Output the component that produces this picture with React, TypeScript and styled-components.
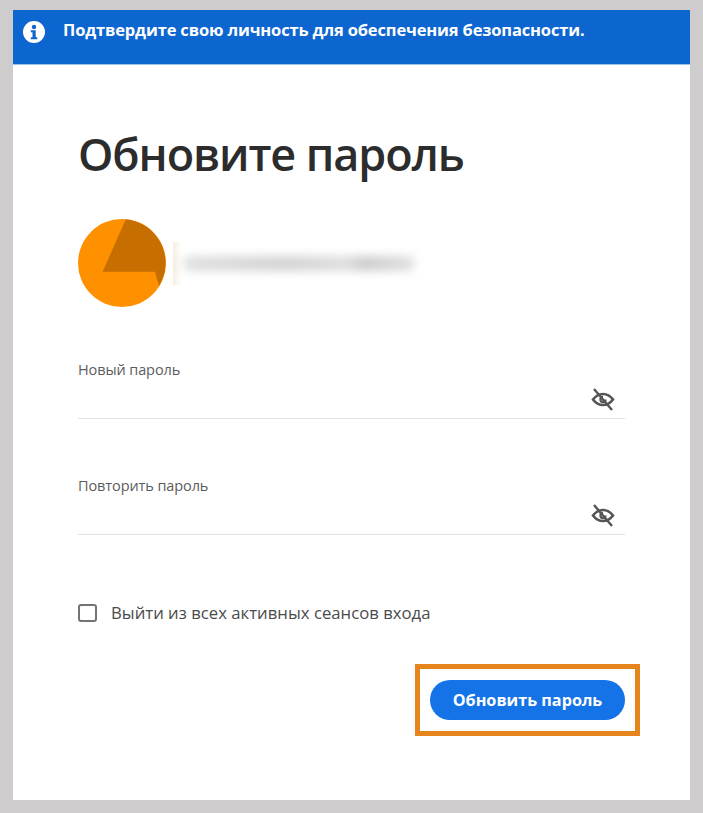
import { ReactElement } from 'react';
import styled, { createGlobalStyle } from 'styled-components';

const GlobalStyle = createGlobalStyle`
  html, body {
    margin: 0;
    padding: 0;
    background: #cecccc;
  }
`;

const Page = styled.div`
  box-sizing: border-box;
  width: 703px;
  height: 813px;
  padding: 10px 13px 13px;
  background: #cecccc;
  font-family: 'Open Sans', 'Noto Sans', sans-serif;
`;

const Card = styled.main`
  height: 790px;
  background: #ffffff;
  display: flex;
  flex-direction: column;
`;

const Banner = styled.div`
  box-sizing: border-box;
  height: 55px;
  padding: 10px 0 0 10px;
  background: #0d66d0;
  border-bottom: 1px solid #9cc3ee;
  display: flex;
  align-items: flex-start;
  gap: 18px;
  color: #ffffff;
`;

const BannerIcon = styled.span`
  display: flex;
  margin-top: 1px;
`;

const BannerText = styled.span`
  font-size: 16.5px;
  font-weight: 700;
  line-height: 20px;
  letter-spacing: -0.15px;
`;

const Content = styled.div`
  flex: 1;
  padding: 0 65px;
  display: flex;
  flex-direction: column;
`;

const Heading = styled.h1`
  margin: 57px 0 0;
  font-size: 45px;
  font-weight: 560;
  line-height: 64px;
  color: #2c2c2c;
  letter-spacing: -1.1px;
`;

const Account = styled.div`
  margin-top: 33px;
  display: flex;
  align-items: center;
  gap: 7px;
`;

const BlurFrame = styled.div`
  box-sizing: border-box;
  width: 250px;
  height: 43px;
  padding-left: 10px;
  overflow: hidden;
  background: linear-gradient(90deg, #f7ede2 0, #ffffff 9px);
  display: flex;
  align-items: center;
`;

const BlurredEmail = styled.div`
  width: 232px;
  height: 15px;
  border-radius: 7px;
  background: linear-gradient(90deg, #e0e0e0, #d2d2d2 45%, #dedede 70%, #cccccc 78%, #e0e0e0);
  filter: blur(5px);
`;

const Field = styled.div<{ $top: number }>`
  margin-top: ${(props) => props.$top}px;
  height: 59px;
  box-sizing: border-box;
  border-bottom: 1px solid #e3e3e3;
  display: flex;
  justify-content: space-between;
`;

const FieldLabel = styled.label`
  margin-top: 1px;
  font-size: 14.5px;
  line-height: 18px;
  color: #5c5c5c;
  letter-spacing: -0.1px;
`;

const FieldIcon = styled.div`
  align-self: flex-end;
  height: 24px;
  margin: 0 10px 7px 0;
`;

const CheckRow = styled.div`
  margin-top: 67px;
  display: flex;
  align-items: center;
  gap: 14px;
`;

const CheckBox = styled.span`
  box-sizing: border-box;
  width: 19px;
  height: 18px;
  border: 2px solid #737373;
  border-radius: 3px;
`;

const CheckLabel = styled.span`
  font-size: 16.7px;
  line-height: 22px;
  color: #4b4b4b;
  letter-spacing: 0.02px;
`;

const Actions = styled.div`
  margin-top: 40px;
  margin-right: -15px;
  display: flex;
  justify-content: flex-end;
`;

const Highlight = styled.div`
  box-sizing: border-box;
  width: 225px;
  height: 72px;
  padding: 11px 10px 0;
  border: 5px solid #e5851b;
`;

const PrimaryButton = styled.button`
  width: 100%;
  height: 40px;
  border: none;
  border-radius: 20px;
  background: #1473e6;
  color: #ffffff;
  font-family: inherit;
  font-size: 16.2px;
  font-weight: 700;
  padding: 0;
`;

const InfoIcon = (): ReactElement => (
  <svg width="22" height="22" viewBox="0 0 22 22">
    <circle cx="11" cy="11" r="11" fill="#ffffff" />
    <circle cx="11" cy="6" r="2.2" fill="#0d66d0" />
    <path d="M7.8 9.2h4.9v7h1.6v2H7.8v-2h1.7v-5H7.8z" fill="#0d66d0" />
  </svg>
);

const EyeOffIcon = (): ReactElement => (
  <svg width="24" height="24" viewBox="0 0 24 24" fill="none" stroke="#555555">
    <path d="M2 12.500C5 8.500 8.500 7 12 7s7 1.500 10 5.500c-3 4-6.500 5.500-10 5.500s-7-1.500-10-5.500z" strokeWidth="2.600" />
    <path d="M12 8.800a3.700 3.700 0 1 0 3.700 3.700h-2.200a1.500 1.500 0 1 1-1.500-1.500z" fill="#555555" stroke="none" />
    <path d="M3 2 21 23" strokeWidth="2.400" />
  </svg>
);

const Avatar = (): ReactElement => (
  <svg width="88" height="88" viewBox="0 0 88 88">
    <circle cx="44" cy="44" r="44" fill="#ff9000" />
    <path d="M47.700.2A44 44 0 0 1 81 67L77 52.700H24.700z" fill="#c66f00" />
  </svg>
);

const PasswordField = ({
  label,
  top,
}: {
  label: string;
  top: number;
}): ReactElement => (
  <Field $top={top}>
    <FieldLabel>{label}</FieldLabel>
    <FieldIcon>
      <EyeOffIcon />
    </FieldIcon>
  </Field>
);

export default function App(): ReactElement {
  return (
    <>
      <GlobalStyle />
      <Page>
        <Card>
          <Banner>
            <BannerIcon>
              <InfoIcon />
            </BannerIcon>
            <BannerText>Подтвердите свою личность для обеспечения безопасности.</BannerText>
          </Banner>
          <Content>
            <Heading>Обновите пароль</Heading>
            <Account>
              <Avatar />
              <BlurFrame>
                <BlurredEmail />
              </BlurFrame>
            </Account>
            <PasswordField label="Новый пароль" top={53} />
            <PasswordField label="Повторить пароль" top={57} />
            <CheckRow>
              <CheckBox />
              <CheckLabel>Выйти из всех активных сеансов входа</CheckLabel>
            </CheckRow>
            <Actions>
              <Highlight>
                <PrimaryButton>Обновить пароль</PrimaryButton>
              </Highlight>
            </Actions>
          </Content>
        </Card>
      </Page>
    </>
  );
}
